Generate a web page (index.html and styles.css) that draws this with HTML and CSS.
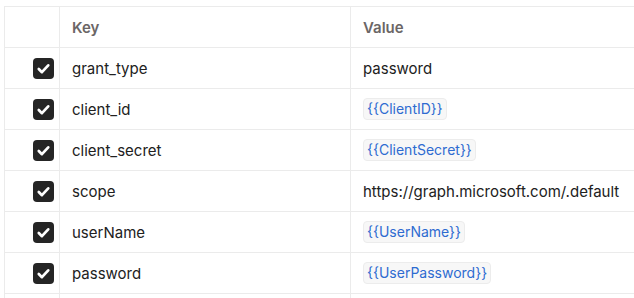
FILE: index.html
```html
<!DOCTYPE html>
<html lang="en">
<head>
    <meta charset="UTF-8">
    <title>Params</title>
    <link rel="stylesheet" href="styles.css">
</head>
<body>
    <div class="params-table">
        <div class="row header">
            <div class="cell check-cell"></div>
            <div class="cell">Key</div>
            <div class="cell">Value</div>
        </div>
        <div class="row">
            <div class="cell check-cell"><span class="checkbox"><svg viewBox="0 0 20 20"><path d="M5.5 10.5l3 3 6-6.5"/></svg></span></div>
            <div class="cell">grant_type</div>
            <div class="cell">password</div>
        </div>
        <div class="row">
            <div class="cell check-cell"><span class="checkbox"><svg viewBox="0 0 20 20"><path d="M5.5 10.5l3 3 6-6.5"/></svg></span></div>
            <div class="cell">client_id</div>
            <div class="cell"><span class="var">{{ClientID}}</span></div>
        </div>
        <div class="row">
            <div class="cell check-cell"><span class="checkbox"><svg viewBox="0 0 20 20"><path d="M5.5 10.5l3 3 6-6.5"/></svg></span></div>
            <div class="cell">client_secret</div>
            <div class="cell"><span class="var">{{ClientSecret}}</span></div>
        </div>
        <div class="row">
            <div class="cell check-cell"><span class="checkbox"><svg viewBox="0 0 20 20"><path d="M5.5 10.5l3 3 6-6.5"/></svg></span></div>
            <div class="cell">scope</div>
            <div class="cell">https://graph.microsoft.com/.default</div>
        </div>
        <div class="row">
            <div class="cell check-cell"><span class="checkbox"><svg viewBox="0 0 20 20"><path d="M5.5 10.5l3 3 6-6.5"/></svg></span></div>
            <div class="cell">userName</div>
            <div class="cell"><span class="var">{{UserName}}</span></div>
        </div>
        <div class="row">
            <div class="cell check-cell"><span class="checkbox"><svg viewBox="0 0 20 20"><path d="M5.5 10.5l3 3 6-6.5"/></svg></span></div>
            <div class="cell">password</div>
            <div class="cell"><span class="var">{{UserPassword}}</span></div>
        </div>
        <div class="row">
            <div class="cell check-cell"></div>
            <div class="cell"></div>
            <div class="cell"></div>
        </div>
    </div>
</body>
</html>
```

FILE: styles.css
```css
:root {
    --border-color: #ebebeb;
    --text-color: #212121;
    --muted-color: #6b6666;
    --var-color: #2e6bd1;
}

body {
    margin: 0;
    padding: 6px 0 0 4px;
    background: white;
    overflow: hidden;
    font-family: 'Inter', sans-serif;
    font-size: 15px;
    color: var(--text-color);
}

.params-table {
    width: 760px;
    border-top: 1px solid var(--border-color);
    border-left: 1px solid var(--border-color);
}

.row {
    display: grid;
    grid-template-columns: 55px 291px 1fr;
    height: 41px;
    box-sizing: border-box;
    border-bottom: 1px solid var(--border-color);
}

.cell {
    display: flex;
    align-items: center;
    padding: 0 12px;
    border-right: 1px solid var(--border-color);
    white-space: nowrap;
}

.header .cell {
    color: var(--muted-color);
    font-weight: 600;
}

.check-cell {
    justify-content: flex-end;
    padding: 0 5px 0 0;
}

.checkbox {
    width: 21px;
    height: 21px;
    border-radius: 4px;
    background: #252525;
    display: flex;
}

.checkbox svg {
    width: 21px;
    height: 21px;
    fill: none;
    stroke: white;
    stroke-width: 2.6;
    stroke-linecap: round;
    stroke-linejoin: round;
}

.var {
    color: var(--var-color);
    background: #f7f7f7;
    border: 1px solid #ececec;
    border-radius: 4px;
    padding: 0 3px;
    font-size: 14px;
    line-height: 20px;
}
```
